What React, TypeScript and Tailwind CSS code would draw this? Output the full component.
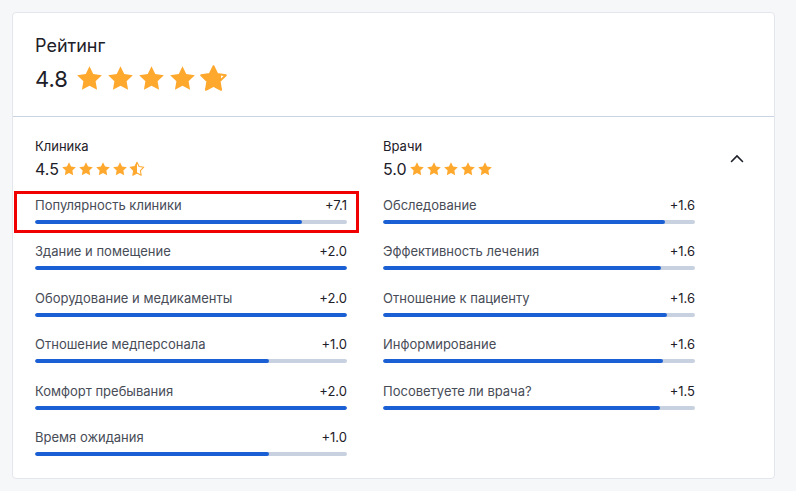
import React, { useId } from 'react';

interface Metric {
  label: string;
  value: string;
  fill: number;
}

const clinic: Metric[] = [
  { label: 'Популярность клиники', value: '+7.1', fill: 85.6 },
  { label: 'Здание и помещение', value: '+2.0', fill: 100 },
  { label: 'Оборудование и медикаменты', value: '+2.0', fill: 100 },
  { label: 'Отношение медперсонала', value: '+1.0', fill: 75 },
  { label: 'Комфорт пребывания', value: '+2.0', fill: 100 },
  { label: 'Время ожидания', value: '+1.0', fill: 75 },
];

const doctors: Metric[] = [
  { label: 'Обследование', value: '+1.6', fill: 90.4 },
  { label: 'Эффективность лечения', value: '+1.6', fill: 89.1 },
  { label: 'Отношение к пациенту', value: '+1.6', fill: 91 },
  { label: 'Информирование', value: '+1.6', fill: 89.7 },
  { label: 'Посоветуете ли врача?', value: '+1.5', fill: 88.8 },
];

const STAR = 'M12 1.8l3.1 6.5 7.1 1-5.15 5 1.22 7.1L12 18.05 5.73 21.4l1.22-7.1-5.15-5 7.1-1L12 1.8z';

const Star: React.FC<{ part: number; size: number }> = ({ part, size }) => {
  const id = useId().replace(/:/g, '');
  return (
    <svg width={size} height={size} viewBox="0 0 24 24">
      <defs>
        <linearGradient id={id}>
          <stop offset={`${part * 100}%`} stopColor="#ffa82e" />
          <stop offset={`${part * 100}%`} stopColor="#ffffff" />
        </linearGradient>
      </defs>
      <path d={STAR} fill={`url(#${id})`} stroke="#ffa82e" strokeWidth={part < 1 ? 1.6 : 0} strokeLinejoin="round" />
    </svg>
  );
};

const Stars: React.FC<{ rating: number; size: number; gap: string }> = ({ rating, size, gap }) => (
  <div className={`flex items-center ${gap}`}>
    {[0, 1, 2, 3, 4].map(i => (
      <Star key={i} size={size} part={Math.max(0, Math.min(1, rating - i))} />
    ))}
  </div>
);

const Row: React.FC<{ m: Metric; marked?: boolean }> = ({ m, marked }) => (
  <div className="relative">
    {marked && (
      <div className="absolute -left-[21px] -right-[12px] -top-[5px] -bottom-[9px] border-[3px] border-[#f00000]" />
    )}
    <div className="flex justify-between text-[13px] leading-[18px]">
      <span className="text-[#474c57]">{m.label}</span>
      <span className="text-[#1d2028]">{m.value}</span>
    </div>
    <div className="mt-[6px] h-[4px] rounded-full bg-[#c8d1df] overflow-hidden">
      <div className="h-full rounded-full bg-[#1b5fd4]" style={{ width: `${m.fill}%` }} />
    </div>
  </div>
);

const Column: React.FC<{ title: string; rating: string; value: number; items: Metric[]; markFirst?: boolean }> = ({
  title,
  rating,
  value,
  items,
  markFirst,
}) => (
  <div className="w-[312px]">
    <div className="text-[13px] leading-[18px] text-[#1d2028]">{title}</div>
    <div className="mt-[4px] flex items-center gap-[2px]">
      <span className="text-[16px] leading-[20px] text-[#1d2028]">{rating}</span>
      <Stars rating={value} size={16} gap="gap-[1px]" />
    </div>
    <div className="mt-[17px] flex flex-col gap-[18.4px]">
      {items.map((m, i) => (
        <Row key={m.label} m={m} marked={markFirst && i === 0} />
      ))}
    </div>
  </div>
);

export default function App() {
  return (
    <div className="w-[796px] h-[491px] bg-[#f6f7f9] p-[12px]" style={{ fontFamily: 'Inter, "Noto Sans", sans-serif' }}>
      <div className="w-[763px] h-[467px] bg-white rounded-[4px] border border-[#e3e6ec] flex flex-col">
        <div className="pl-[22px] pt-[21px] pb-[23px] border-b border-[#c9d3e3]">
          <div className="text-[18px] leading-[24px] text-[#1d2028]">Рейтинг</div>
          <div className="mt-[6px] flex items-center gap-[7px]">
            <span className="text-[22px] leading-[28px] text-[#1d2028]">4.8</span>
            <Stars rating={4.8} size={29} gap="gap-[2px]" />
          </div>
        </div>
        <div className="flex pl-[22px] pt-[20px]">
          <Column title="Клиника" rating="4.5" value={4.5} items={clinic} markFirst />
          <div className="w-[36px]" />
          <Column title="Врачи" rating="5.0" value={5} items={doctors} />
          <div className="ml-[34px] mt-[14px]">
            <svg width="16" height="16" viewBox="0 0 16 16" fill="none">
              <path d="M2.5 10.5L8 5l5.5 5.5" stroke="#1d2028" strokeWidth="1.6" strokeLinecap="round" />
            </svg>
          </div>
        </div>
      </div>
    </div>
  );
}
